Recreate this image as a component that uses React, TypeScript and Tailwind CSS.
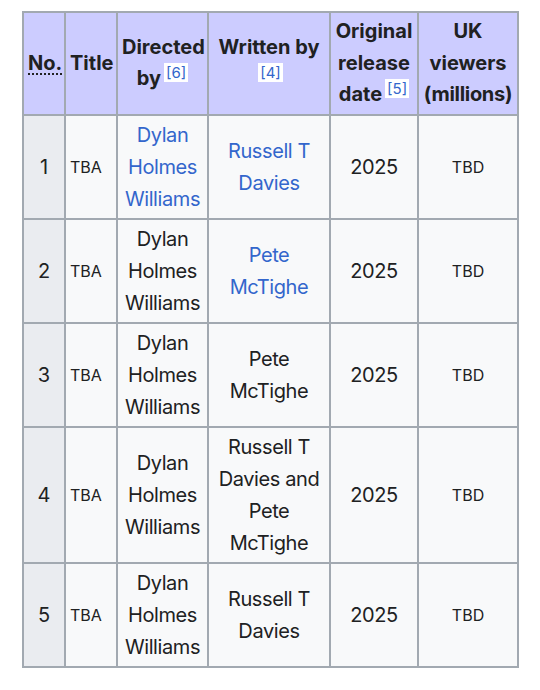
import React from 'react';

type Row = {
  no: number;
  director: string[];
  directorLink: boolean;
  writer: string[];
  writerLink: boolean;
};

const dylan = ['Dylan', 'Holmes', 'Williams'];

const rows: Row[] = [
  { no: 1, director: dylan, directorLink: true, writer: ['Russell T', 'Davies'], writerLink: true },
  { no: 2, director: dylan, directorLink: false, writer: ['Pete', 'McTighe'], writerLink: true },
  { no: 3, director: dylan, directorLink: false, writer: ['Pete', 'McTighe'], writerLink: false },
  { no: 4, director: dylan, directorLink: false, writer: ['Russell T', 'Davies and', 'Pete', 'McTighe'], writerLink: false },
  { no: 5, director: dylan, directorLink: false, writer: ['Russell T', 'Davies'], writerLink: false },
];

const Ref = ({ n }: { n: number }) => (
  <sup className="ml-[3px] bg-white px-[2px] text-[15px] font-normal leading-[17px] tracking-normal text-[#3366cc]">[{n}]</sup>
);

const Lines = ({ lines, link }: { lines: string[]; link: boolean }) => (
  <span className={link ? 'text-[#3366cc]' : ''}>
    {lines.map((l, i) => (
      <React.Fragment key={i}>
        {i > 0 && <br />}
        {l}
      </React.Fragment>
    ))}
  </span>
);

const th = 'border-2 border-[#a2a9b1] bg-[#ccccff] px-1 py-[3px] text-center align-middle font-bold leading-[31.5px]';
const td = 'border-2 border-[#a2a9b1] bg-[#f8f9fa] px-1 py-[3px] text-center align-middle tracking-[-0.4px]';

export default function App() {
  return (
    <div className="min-h-screen bg-white pl-[22px] pt-[11px] font-[Inter,'Noto_Sans',sans-serif] text-[20px] leading-[32px] text-[#202122]">
      <table className="w-[495px] table-fixed border-collapse border-2 border-[#a2a9b1]">
        <colgroup>
          <col className="w-[42px]" />
          <col className="w-[52px]" />
          <col className="w-[91px]" />
          <col className="w-[122px]" />
          <col className="w-[88px]" />
          <col className="w-[100px]" />
        </colgroup>
        <thead>
          <tr>
            <th className={th}>
              <abbr className="underline decoration-dotted underline-offset-4">No.</abbr>
            </th>
            <th className={th}>Title</th>
            <th className={th}>
              Directed
              <br />
              by<Ref n={6} />
            </th>
            <th className={th}>
              Written by
              <br />
              <Ref n={4} />
            </th>
            <th className={th}>
              Original
              <br />
              release
              <br />
              date<Ref n={5} />
            </th>
            <th className={th}>
              UK
              <br />
              viewers
              <br />
              <span className="tracking-[-0.3px]">(millions)</span>
            </th>
          </tr>
        </thead>
        <tbody>
          {rows.map((r) => (
            <tr key={r.no}>
              <td className="border-2 border-[#a2a9b1] bg-[#eaecf0] px-1 py-[3px] text-center align-middle">{r.no}</td>
              <td className="border-2 border-[#a2a9b1] bg-[#f8f9fa] px-1 py-[3px] text-left align-middle text-[16px]">TBA</td>
              <td className={td}>
                <Lines lines={r.director} link={r.directorLink} />
              </td>
              <td className={td}>
                <Lines lines={r.writer} link={r.writerLink} />
              </td>
              <td className={td}>2025</td>
              <td className={`${td} text-[16px] tracking-normal`}>TBD</td>
            </tr>
          ))}
        </tbody>
      </table>
    </div>
  );
}
